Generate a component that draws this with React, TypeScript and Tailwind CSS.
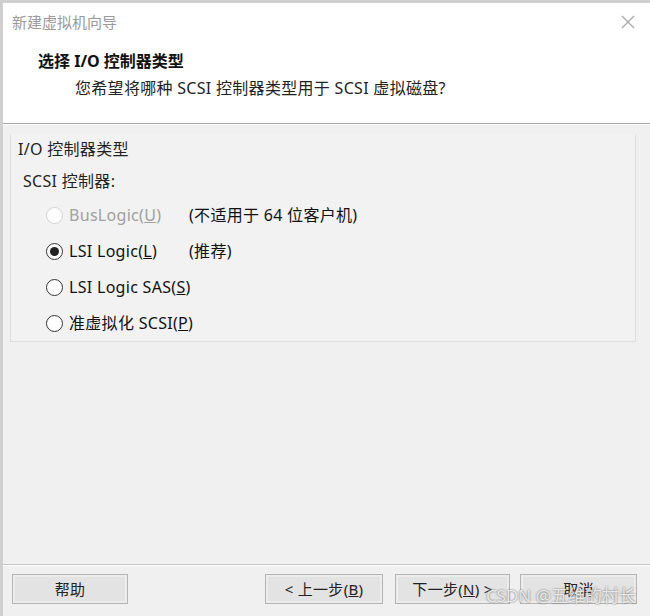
import React from 'react'

const cjk = { fontFamily: '"Noto Sans", "Noto Sans CJK SC", sans-serif' }

function Radio({ checked, disabled }: { checked?: boolean; disabled?: boolean }) {
  return (
    <span
      className={
        'flex h-[17px] w-[17px] shrink-0 items-center justify-center rounded-full border bg-white ' +
        (disabled ? 'border-[#d0d0d0]' : 'border-[#333333]')
      }
    >
      {checked && <span className="h-[9px] w-[9px] rounded-full bg-[#222222]" />}
    </span>
  )
}

function Option({
  label,
  hot,
  tail,
  note,
  checked,
  disabled,
}: {
  label: string
  hot: string
  tail: string
  note?: string
  checked?: boolean
  disabled?: boolean
}) {
  return (
    <div className="flex h-[36px] items-center whitespace-nowrap">
      <div className="flex min-w-[143px] items-center gap-[6px]">
        <Radio checked={checked} disabled={disabled} />
        <span className={disabled ? 'text-[#a0a0a0]' : 'text-[#111111]'}>
          {label}
          <span className="underline">{hot}</span>
          {tail}
        </span>
      </div>
      {note && <span className="text-[#111111]">{note}</span>}
    </div>
  )
}

function Btn({ children, className = '' }: { children: React.ReactNode; className?: string }) {
  return (
    <button
      className={
        'flex h-[30px] items-center justify-center whitespace-nowrap border border-[#b4b4b4] bg-[#e3e3e3] text-[15px] text-[#222222] shadow-[inset_0_0_0_2px_#ececec] ' +
        className
      }
    >
      {children}
    </button>
  )
}

export default function App() {
  return (
    <div
      className="relative flex h-[616px] w-[650px] flex-col overflow-hidden border-l-[3px] border-t-[3px] border-[#cfcfcf] bg-[#f0f0f0] text-[16px] tracking-[0.3px]"
      style={cjk}
    >
      <div className="flex h-[120px] flex-col bg-white">
        <div className="flex h-[38px] items-center justify-between pl-[9px] pr-[14px]">
          <span className="text-[15px] tracking-normal text-[#9a9a9a]">新建虚拟机向导</span>
          <svg width="16" height="16" viewBox="0 0 16 16" className="text-[#aaaaaa]">
            <path d="M2 2 L14 14 M14 2 L2 14" stroke="currentColor" strokeWidth="1.4" />
          </svg>
        </div>
        <div className="pl-[35px] pt-[8px] font-bold tracking-normal text-[#111111]">选择 I/O 控制器类型</div>
        <div className="pl-[72px] pt-[3px] text-[#222222]">您希望将哪种 SCSI 控制器类型用于 SCSI 虚拟磁盘?</div>
      </div>
      <div className="h-[2px] border-t border-b border-t-[#a8a8a8] border-b-white" />

      <div className="flex flex-1 flex-col px-[7px] pt-[9px]">
        <div className="relative mr-[7px] h-[208px] border border-[#dddddd] border-t-transparent bg-[#f2f2f2]">
          <div className="pl-[7px] pt-[2px] text-[#222222]">I/O 控制器类型</div>
          <div className="mt-[8px] mr-[4px] pb-[6px]">
            <div className="pl-[12px] text-[#222222]">SCSI 控制器:</div>
            <div className="mt-[4px] pl-[35px]">
              <Option label="BusLogic(" hot="U" tail=")" note="(不适用于 64 位客户机)" disabled />
              <Option label="LSI Logic(" hot="L" tail=")" note="(推荐)" checked />
              <Option label="LSI Logic SAS(" hot="S" tail=")" />
              <Option label="准虚拟化 SCSI(" hot="P" tail=")" />
            </div>
          </div>
        </div>
      </div>

      <div className="h-[2px] border-t border-b border-t-[#c4c4c4] border-b-white" />
      <div className="flex h-[50px] items-center pl-[9px] pr-[13px] pb-[4px]">
        <Btn className="w-[116px]">帮助</Btn>
        <div className="ml-auto flex">
          <Btn className="w-[118px]">
            &lt; 上一步(<span className="underline">B</span>)
          </Btn>
          <Btn className="ml-[12px] w-[115px] text-[#7a7a7a]">
            下一步(<span className="underline">N</span>) &gt;
          </Btn>
          <Btn className="ml-[10px] w-[117px]">取消</Btn>
        </div>
      </div>

      <div className="pointer-events-none absolute bottom-[8px] right-[14px] text-[17px] tracking-normal text-white/80 [text-shadow:0_0_2px_#555]">
        CSDN @五维的村长
      </div>
    </div>
  )
}
